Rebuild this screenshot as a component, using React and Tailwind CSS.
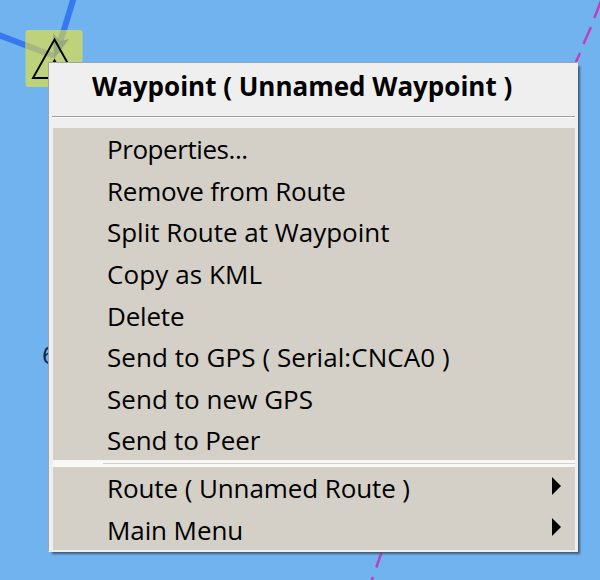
const waypointActions = [
  { label: "Properties...", tracking: "tracking-[-0.43px]" },
  { label: "Remove from Route", tracking: "tracking-[-0.2px]" },
  { label: "Split Route at Waypoint", tracking: "tracking-[-0.02px]" },
  { label: "Copy as KML", tracking: "tracking-[0.1px]" },
  { label: "Delete", tracking: "tracking-[-0.2px]" },
  { label: "Send to GPS ( Serial:CNCA0 )", tracking: "tracking-[0.06px]" },
  { label: "Send to new GPS", tracking: "tracking-[0.05px]" },
  { label: "Send to Peer", tracking: "tracking-[-0.1px]" },
];

const submenus = [
  { label: "Route ( Unnamed Route )", tracking: "tracking-[-0.1px]" },
  { label: "Main Menu", tracking: "tracking-[-0.1px]" },
];

function MenuItem({ label, tracking, submenu }) {
  return (
    <div className="flex h-[41.6px] items-center justify-between pl-[54px] pr-[14px]">
      <span className={`whitespace-pre pt-px text-[26px] leading-[38px] ${tracking}`}>{label}</span>
      {submenu && (
        <svg className="mb-[4px] h-[18px] w-[9px] shrink-0" viewBox="0 0 9 18">
          <path d="M0 0L9 9L0 18Z" fill="#000" />
        </svg>
      )}
    </div>
  );
}

function Chart() {
  return (
    <svg className="absolute inset-0" width="600" height="580" viewBox="0 0 600 580">
      <clipPath id="marker">
        <rect x="25.5" y="30" width="57" height="57" rx="3" />
      </clipPath>
      <g stroke="#3878ee" strokeWidth="6" fill="none">
        <path d="M-4 34L54 56" />
        <path d="M74 -3L56 56" />
      </g>
      <rect x="25.5" y="30" width="57" height="57" rx="3" fill="#bed27c" />
      <g clipPath="url(#marker)">
        <path d="M-4 34L54 56" stroke="#a7b780" strokeWidth="6" fill="none" />
        <path d="M74 -3L57 52" stroke="#a7b780" strokeWidth="6" fill="none" />
        <path d="M53 33L60 41L69 39L54 59Z" fill="#98aa7d" />
      </g>
      <path d="M54.5 39.5L33 78H76Z" fill="none" stroke="#000" strokeWidth="1.9" />
      <path d="M54.5 58.5L57 63H52Z" fill="#000" />
      <g stroke="#bc3fc2" strokeWidth="2.5" fill="none">
        <path d="M601 1L594.3 18" />
        <path d="M591 27L583.5 44" />
        <path d="M580 53L575.5 63" />
        <path d="M382 551L376.3 567.5" />
        <path d="M373 577L371 582" />
      </g>
    </svg>
  );
}

export default function App() {
  return (
    <div className="relative h-[580px] w-[600px] overflow-hidden bg-[#71b3ef] font-['Open_Sans','Noto_Sans',sans-serif] text-black">
      <Chart />
      <span className="absolute left-[42px] top-[336px] text-[26px] leading-[36px] text-[#10283e]">6</span>
      <div className="absolute left-[48px] top-[62px] h-[490px] w-[530px] border border-[#a0a4a8] border-b-[#eeeeee] border-r-[#eeeeee] bg-[#efefef] pl-1 pr-[2px] shadow-[3px_3px_2px_-1px_#3d5f7c]">
        <div className="-ml-px h-[54px] border-b border-[#a0a0a0] pl-[40px] pt-[4px]">
          <span className="whitespace-pre text-[26px] font-bold leading-[38px] tracking-[-0.01px]">Waypoint ( Unnamed Waypoint )</span>
        </div>
        <div className="h-[11px] border-t border-white" />
        <div className="h-[332px] bg-[#d4d0c8]">
          {waypointActions.map((item) => (
            <MenuItem key={item.label} {...item} />
          ))}
        </div>
        <div className="h-[7px] bg-[#f8f8f7] pl-[50px] pt-[3px]">
          <div className="h-px bg-[#d0d0ce]" />
        </div>
        <div className="h-[83px] bg-[#d4d0c8]">
          {submenus.map((item) => (
            <MenuItem key={item.label} {...item} submenu />
          ))}
        </div>
      </div>
    </div>
  );
}
